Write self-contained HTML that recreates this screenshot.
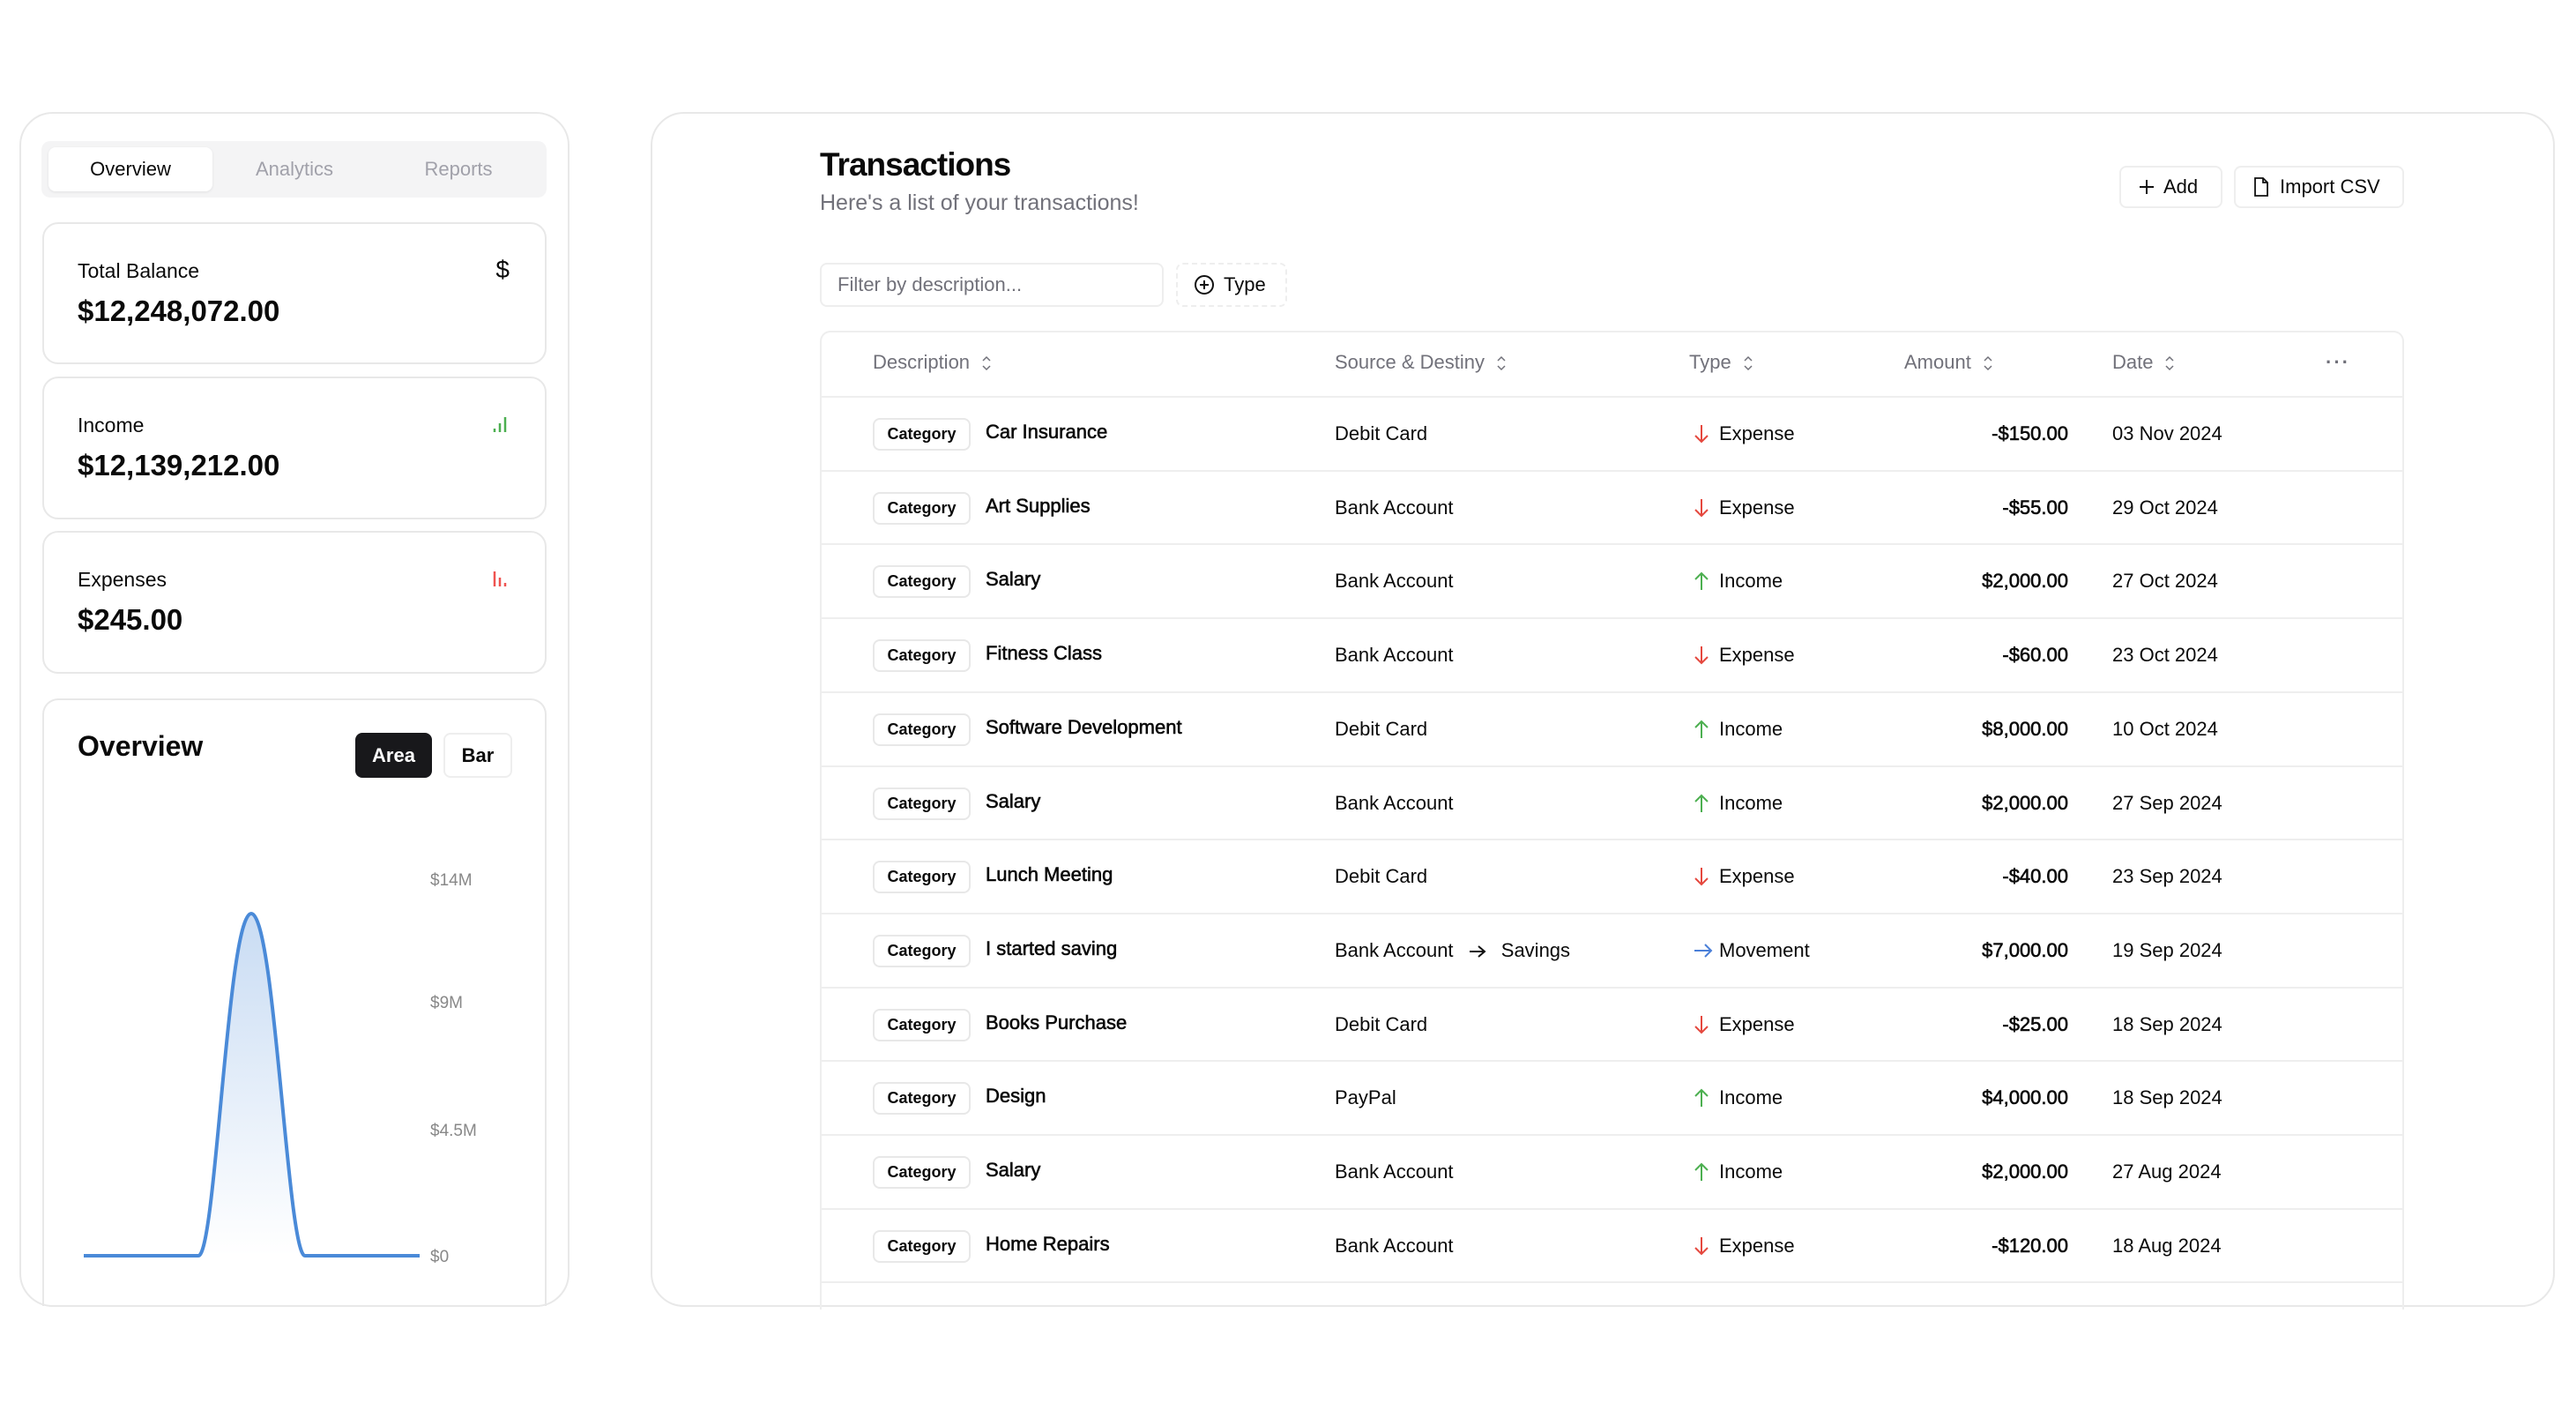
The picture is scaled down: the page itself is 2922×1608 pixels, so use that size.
<!DOCTYPE html>
<html><head><meta charset="utf-8"><style>
*{box-sizing:border-box;margin:0;padding:0}
body{width:2922px;height:1608px;background:#fff;font-family:"Liberation Sans",sans-serif;color:#0a0a0a;position:relative;overflow:hidden}
.a{position:absolute}
.card{position:absolute;border:2px solid #e8e8e8;border-radius:18px;background:#fff}
.lbl{font-size:23px;position:absolute;left:38px;top:40px}
.val{font-size:33px;font-weight:bold;position:absolute;left:38px;top:80px}
.hd{position:absolute;top:-3px;height:74px;line-height:74px;font-size:22px;color:#71717a}
.row{position:absolute;left:0;width:1796px;height:84px;border-top:2px solid #eee;font-size:22px}
.row span{position:absolute;top:0;line-height:82px;white-space:nowrap}
.md{-webkit-text-stroke:0.6px #0a0a0a}
.badge{position:absolute;top:23px;left:58px;width:111px;height:37px;border:2px solid #e8e8e8;border-radius:8px;font-size:18px;font-weight:bold;text-align:center;line-height:33px}
.sort{display:inline-block;vertical-align:middle;margin-left:14px}
</style></head><body>

<div class="card" style="left:22px;top:127px;width:624px;height:1355px;border-radius:38px"></div>
<div class="a" style="left:47px;top:160px;width:573px;height:64px;background:#f4f4f5;border-radius:10px"></div>
<div class="a" style="left:55px;top:167px;width:186px;height:50px;background:#fff;border-radius:8px;box-shadow:0 1px 3px rgba(0,0,0,.08)"></div>
<div class="a" style="left:55px;top:167px;width:186px;line-height:50px;text-align:center;font-size:22px">Overview</div>
<div class="a" style="left:241px;top:167px;width:186px;line-height:50px;text-align:center;font-size:22px;color:#a1a1aa">Analytics</div>
<div class="a" style="left:427px;top:167px;width:186px;line-height:50px;text-align:center;font-size:22px;color:#a1a1aa">Reports</div>

<div class="card" style="left:48px;top:252px;width:572px;height:161px">
<div class="lbl" style="left:38px;top:40px">Total Balance</div>
<div class="val">$12,248,072.00</div>
<div class="a" style="right:40px;top:36px;font-size:28px">$</div>
</div>
<div class="card" style="left:48px;top:427px;width:572px;height:162px">
<div class="lbl">Income</div>
<div class="val">$12,139,212.00</div>
<svg class="a" style="right:42px;top:42px" width="18" height="20"><g stroke="#4caf50" stroke-width="2.5"><line x1="3" y1="19" x2="3" y2="15"/><line x1="9" y1="19" x2="9" y2="9"/><line x1="15" y1="19" x2="15" y2="2"/></g></svg>
</div>
<div class="card" style="left:48px;top:602px;width:572px;height:162px">
<div class="lbl">Expenses</div>
<div class="val">$245.00</div>
<svg class="a" style="right:42px;top:42px" width="18" height="20"><g stroke="#ef5350" stroke-width="2.5"><line x1="3" y1="19" x2="3" y2="2"/><line x1="9" y1="19" x2="9" y2="9"/><line x1="15" y1="19" x2="15" y2="15"/></g></svg>
</div>

<div class="a" style="left:48px;top:792px;width:572px;height:689px;border:2px solid #e8e8e8;border-bottom:none;border-radius:18px 18px 0 0"></div>
<div class="a" style="left:88px;top:828px;font-size:32px;font-weight:bold">Overview</div>
<div class="a" style="left:403px;top:831px;width:87px;height:51px;background:#18181b;color:#fff;border-radius:8px;text-align:center;line-height:51px;font-size:22px;font-weight:bold">Area</div>
<div class="a" style="left:503px;top:831px;width:78px;height:51px;border:2px solid #eee;border-radius:8px;text-align:center;line-height:47px;font-size:22px;font-weight:bold">Bar</div>
<div class="a" style="left:488px;top:988px;font-size:19px;color:#888">$14M</div>
<div class="a" style="left:488px;top:1127px;font-size:19px;color:#888">$9M</div>
<div class="a" style="left:488px;top:1272px;font-size:19px;color:#888">$4.5M</div>
<div class="a" style="left:488px;top:1415px;font-size:19px;color:#888">$0</div>
<svg class="a" style="left:0;top:0" width="660" height="1500">
<defs><linearGradient id="g" x1="0" y1="0" x2="0" y2="1"><stop offset="0" stop-color="#4a8ad8" stop-opacity=".3"/><stop offset="1" stop-color="#4a8ad8" stop-opacity="0"/></linearGradient></defs>
<path d="M95 1424 L225 1424 C245 1424 258 1036 285 1036 C312 1036 326 1424 346 1424 L476 1424 Z" fill="url(#g)"/>
<path d="M95 1424 L225 1424 C245 1424 258 1036 285 1036 C312 1036 326 1424 346 1424 L476 1424" fill="none" stroke="#4a8ad8" stroke-width="4"/>
</svg>

<div class="card" style="left:738px;top:127px;width:2160px;height:1355px;border-radius:38px"></div>
<div class="a" style="left:930px;top:166px;font-size:37px;font-weight:bold;letter-spacing:-1px">Transactions</div>
<div class="a" style="left:930px;top:216px;font-size:25px;color:#71717a">Here's a list of your transactions!</div>

<div class="a" style="left:2404px;top:188px;width:117px;height:48px;border:2px solid #eee;border-radius:8px;font-size:22px;line-height:44px;padding-left:20px"><svg width="18" height="18" style="vertical-align:-2px;margin-right:10px"><path d="M9 1v16M1 9h16" stroke="#111" stroke-width="2"/></svg>Add</div>
<div class="a" style="left:2534px;top:188px;width:193px;height:48px;border:2px solid #eee;border-radius:8px;font-size:22px;line-height:44px;padding-left:20px"><svg width="18" height="22" style="vertical-align:-4px;margin-right:12px"><path d="M2 1h9l5 5v15H2z M11 1v5h5" fill="none" stroke="#111" stroke-width="1.8"/></svg>Import CSV</div>

<div class="a" style="left:930px;top:298px;width:390px;height:50px;border:2px solid #eee;border-radius:8px;font-size:22px;color:#71717a;line-height:46px;padding-left:18px">Filter by description...</div>
<div class="a" style="left:1334px;top:298px;width:126px;height:50px;border:2px dashed #eee;border-radius:8px;font-size:22px;line-height:46px;padding-left:18px"><svg width="24" height="24" style="vertical-align:-5px;margin-right:10px"><circle cx="12" cy="12" r="10" fill="none" stroke="#111" stroke-width="2"/><path d="M12 7v10M7 12h10" stroke="#111" stroke-width="2"/></svg>Type</div>

<div class="a" style="left:930px;top:375px;width:1797px;height:1110px;border:2px solid #eee;border-bottom:none;border-radius:12px 12px 0 0;overflow:hidden">
<div class="hd" style="left:58px">Description<svg class="sort" width="10" height="18"><path d="M1 6l4-4 4 4M1 12l4 4 4-4" fill="none" stroke="#71717a" stroke-width="1.5"/></svg></div>
<div class="hd" style="left:582px">Source &amp; Destiny<svg class="sort" width="10" height="18"><path d="M1 6l4-4 4 4M1 12l4 4 4-4" fill="none" stroke="#71717a" stroke-width="1.5"/></svg></div>
<div class="hd" style="left:984px">Type<svg class="sort" width="10" height="18"><path d="M1 6l4-4 4 4M1 12l4 4 4-4" fill="none" stroke="#71717a" stroke-width="1.5"/></svg></div>
<div class="hd" style="left:1228px">Amount<svg class="sort" width="10" height="18"><path d="M1 6l4-4 4 4M1 12l4 4 4-4" fill="none" stroke="#71717a" stroke-width="1.5"/></svg></div>
<div class="hd" style="left:1464px">Date<svg class="sort" width="10" height="18"><path d="M1 6l4-4 4 4M1 12l4 4 4-4" fill="none" stroke="#71717a" stroke-width="1.5"/></svg></div>
<div class="hd" style="left:1706px;font-weight:bold;letter-spacing:2px">···</div>
<div id="rows"></div>
</div>

<script>
const D=[["Car Insurance","Debit Card","e","-$150.00","03 Nov 2024"],["Art Supplies","Bank Account","e","-$55.00","29 Oct 2024"],["Salary","Bank Account","i","$2,000.00","27 Oct 2024"],["Fitness Class","Bank Account","e","-$60.00","23 Oct 2024"],["Software Development","Debit Card","i","$8,000.00","10 Oct 2024"],["Salary","Bank Account","i","$2,000.00","27 Sep 2024"],["Lunch Meeting","Debit Card","e","-$40.00","23 Sep 2024"],["I started saving","Bank Account","m","$7,000.00","19 Sep 2024"],["Books Purchase","Debit Card","e","-$25.00","18 Sep 2024"],["Design","PayPal","i","$4,000.00","18 Sep 2024"],["Salary","Bank Account","i","$2,000.00","27 Aug 2024"],["Home Repairs","Bank Account","e","-$120.00","18 Aug 2024"]];
const ic={e:'<svg width="20" height="24" style="vertical-align:-5px"><path d="M10 2v19M3 14l7 7 7-7" fill="none" stroke="#e5483e" stroke-width="2"/></svg>',i:'<svg width="20" height="24" style="vertical-align:-5px"><path d="M10 22V3M3 10l7-7 7 7" fill="none" stroke="#4caf50" stroke-width="2"/></svg>',m:'<svg width="24" height="20" style="vertical-align:-3px"><path d="M2 10h19M14 3l7 7-7 7" fill="none" stroke="#4a7fd8" stroke-width="2"/></svg>'};
const tn={e:"Expense",i:"Income",m:"Movement"};
let h="";D.forEach((r,k)=>{const src=r[2]=="m"?'Bank Account <svg width="22" height="18" style="vertical-align:-3px;margin:0 10px"><path d="M2 9h17M12 3l7 6-7 6" fill="none" stroke="#111" stroke-width="2"/></svg> Savings':r[1];
h+=`<div class="row" style="top:${72+k*83.7}px"><div class="badge">Category</div><span class="md" style="left:186px;top:-2px">${r[0]}</span><span style="left:582px">${src}</span><span style="left:988px">${ic[r[2]]}</span><span style="left:1018px">${tn[r[2]]}</span><span class="md" style="right:382px;text-align:right">${r[3]}</span><span style="left:1464px">${r[4]}</span></div>`});
document.getElementById("rows").innerHTML=h+`<div class="row" style="top:${72+12*83.7}px"></div>`;
</script>
</body></html>
